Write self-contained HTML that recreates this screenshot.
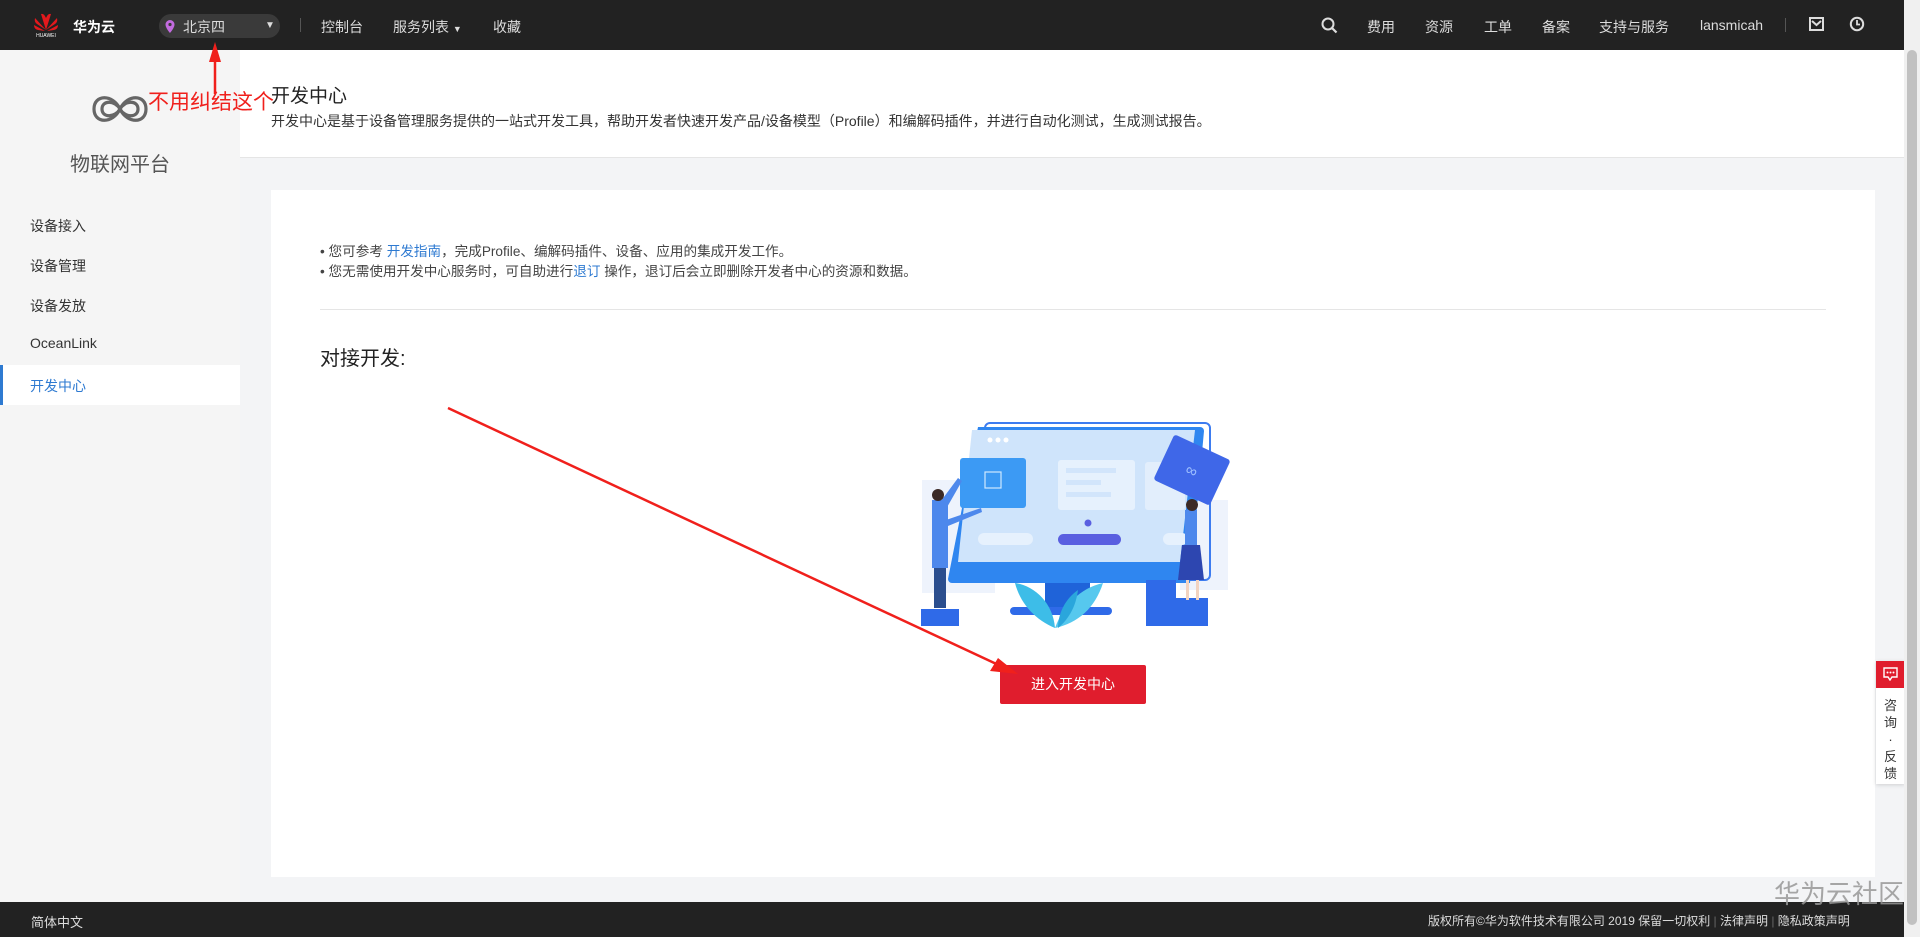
<!DOCTYPE html>
<html><head><meta charset="utf-8"><style>
*{margin:0;padding:0;box-sizing:border-box}
body{width:1920px;height:937px;overflow:hidden;background:#f3f4f6;font-family:"Liberation Sans","Noto Sans CJK SC",sans-serif;position:relative;color:#252b3a}
.abs{position:absolute;white-space:nowrap}
.top{position:absolute;left:0;top:0;width:1904px;height:50px;background:#222;color:#ddd;font-size:14px}
.top .abs{top:17px}
.side{position:absolute;left:0;top:50px;width:240px;height:852px;background:#f5f5f5}
.side .it{position:absolute;left:30px;font-size:14px;color:#333}
.hdr{position:absolute;left:240px;top:50px;width:1664px;height:108px;background:#fff;border-bottom:1px solid #e5e5e5}
.card{position:absolute;left:271px;top:190px;width:1604px;height:687px;background:#fff}
.foot{position:absolute;left:0;top:902px;width:1904px;height:35px;background:#222;color:#ddd;font-size:13px}
.sb{position:absolute;left:1904px;top:0;width:16px;height:937px;background:#f0f0f0}
.sb i{position:absolute;left:3px;top:50px;width:10px;height:875px;background:#c1c1c1;border-radius:5px}
a{color:#2e7ad1;text-decoration:none}
</style></head><body>
<div class="top">
 <svg class="abs" style="left:32px;top:10px" width="28" height="28" viewBox="0 0 28 28"><g fill="#e3191d"><path d="M14 20 L9 4 Q12 3 14 8Z"/><path d="M14 20 L19 4 Q16 3 14 8Z"/><path d="M14 20 L3 8 Q2 12 5 14Z"/><path d="M14 20 L25 8 Q26 12 23 14Z"/><path d="M13 21 L2 15 Q2 19 6 20Z"/><path d="M15 21 L26 15 Q26 19 22 20Z"/></g><text x="14" y="27" font-size="5" fill="#fff" text-anchor="middle" font-family="Liberation Sans">HUAWEI</text></svg>
 <div class="abs" style="left:73px;color:#fff;font-weight:bold">华为云</div>
 <div class="abs" style="left:159px;top:14px;width:121px;height:24px;background:#3a3a3a;border-radius:12px"></div>
 <svg class="abs" style="left:165px;top:20px" width="10" height="13" viewBox="0 0 10 13"><path d="M5 0a4.5 4.5 0 0 0-4.5 4.5C.5 8 5 13 5 13s4.5-5 4.5-8.5A4.5 4.5 0 0 0 5 0z" fill="#c36be0"/><circle cx="5" cy="4.5" r="1.6" fill="#3a3a3a"/></svg>
 <div class="abs" style="left:183px">北京四</div>
 <div class="abs" style="left:265px;font-size:10px;top:20px">▼</div>
 <div class="abs" style="left:300px;top:18px;width:1px;height:14px;background:#555"></div>
 <div class="abs" style="left:321px">控制台</div>
 <div class="abs" style="left:393px">服务列表 <span style="font-size:9px">▼</span></div>
 <div class="abs" style="left:493px">收藏</div>
 <svg class="abs" style="left:1321px;top:17px" width="17" height="17" viewBox="0 0 17 17"><circle cx="7" cy="7" r="5.5" fill="none" stroke="#ddd" stroke-width="2"/><path d="M11 11l4.5 4.5" stroke="#ddd" stroke-width="2.2"/></svg>
 <div class="abs" style="left:1367px">费用</div>
 <div class="abs" style="left:1425px">资源</div>
 <div class="abs" style="left:1484px">工单</div>
 <div class="abs" style="left:1542px">备案</div>
 <div class="abs" style="left:1599px">支持与服务</div>
 <div class="abs" style="left:1700px">lansmicah</div>
 <div class="abs" style="left:1785px;top:18px;width:1px;height:14px;background:#555"></div>
 <svg class="abs" style="left:1809px;top:17px" width="15" height="14" viewBox="0 0 15 14"><rect x="1" y="1" width="13" height="12" fill="none" stroke="#ddd" stroke-width="2"/><path d="M3 4l4.5 4 4.5-4" fill="none" stroke="#ddd" stroke-width="2"/></svg>
 <svg class="abs" style="left:1849px;top:16px" width="16" height="16" viewBox="0 0 16 16"><circle cx="8" cy="8" r="6.2" fill="none" stroke="#ddd" stroke-width="2"/><path d="M8 4v4.5h3" fill="none" stroke="#ddd" stroke-width="1.8"/></svg>
</div>
<div class="side">
 <svg class="abs" style="left:91px;top:40px" width="58" height="38" viewBox="0 0 58 38"><g fill="none" stroke="#666" stroke-width="3.2"><path d="M29 19C22 4 3 4 3 19s19 15 26 0 26-15 26 0-19 15-26 0"/><path d="M29 19C24 10 11 10 11 19s13 9 18 0 18-9 18 0-13 9-18 0"/></g></svg>
 <div class="abs" style="left:0;width:240px;text-align:center;top:98px;font-size:20px;color:#555">物联网平台</div>
 <div class="it" style="top:166px">设备接入</div>
 <div class="it" style="top:206px">设备管理</div>
 <div class="it" style="top:246px">设备发放</div>
 <div class="it" style="top:285px">OceanLink</div>
 <div style="position:absolute;left:0;top:315px;width:240px;height:40px;background:#fff;border-left:3px solid #2e7ad1"></div>
 <div class="it" style="top:326px;color:#2e7ad1">开发中心</div>
</div>
<div class="hdr">
 <div class="abs" style="left:31px;top:31px;font-size:19px;color:#222">开发中心</div>
 <div class="abs" style="left:31px;top:61px;font-size:14px;color:#333">开发中心是基于设备管理服务提供的一站式开发工具，帮助开发者快速开发产品/设备模型（Profile）和编解码插件，并进行自动化测试，生成测试报告。</div>
</div>
<div class="card">
 <div class="abs" style="left:49px;top:50px;font-size:13.6px;color:#444">• 您可参考 <a>开发指南</a>，完成Profile、编解码插件、设备、应用的集成开发工作。</div>
 <div class="abs" style="left:49px;top:70px;font-size:13.6px;color:#444">• 您无需使用开发中心服务时，可自助进行<a>退订</a> 操作，退订后会立即删除开发者中心的资源和数据。</div>
 <div class="abs" style="left:49px;top:119px;width:1506px;height:1px;background:#e5e5e5"></div>
 <div class="abs" style="left:49px;top:152px;font-size:20px;color:#222">对接开发:</div>
 <div class="abs" style="left:729px;top:475px;width:146px;height:39px;background:#e01d2d;color:#fff;font-size:14px;text-align:center;line-height:39px;border-radius:2px">进入开发中心</div>
</div>
<svg class="abs" style="left:900px;top:410px" width="340" height="230" viewBox="900 410 340 230">
 <rect x="922" y="480" width="73" height="113" fill="#eef3fc"/>
 <rect x="1180" y="500" width="48" height="90" fill="#eef3fc"/>
 <rect x="985" y="423" width="225" height="157" rx="5" fill="none" stroke="#3d7cf0" stroke-width="2"/>
 <path d="M978 427H1200a4 4 0 0 1 4 4L1190 583H952a4 4 0 0 1-4-4Z" fill="#2f86f0"/>
 <path d="M972 430H1195L1180 562H958Z" fill="#cfe4fb"/>
 <circle cx="990" cy="440" r="2.5" fill="#fff"/><circle cx="998" cy="440" r="2.5" fill="#fff"/><circle cx="1006" cy="440" r="2.5" fill="#fff"/>
 <rect x="1058" y="460" width="77" height="50" rx="3" fill="#e6f1fd"/>
 <rect x="1066" y="468" width="50" height="5" fill="#d2e5fb"/><rect x="1066" y="480" width="35" height="5" fill="#d2e5fb"/><rect x="1066" y="492" width="45" height="5" fill="#d2e5fb"/>
 <rect x="1145" y="462" width="40" height="48" rx="3" fill="#e2eefc"/>
 <rect x="978" y="533" width="55" height="12" rx="6" fill="#e6f1fd"/>
 <rect x="1163" y="533" width="25" height="12" rx="6" fill="#e6f1fd"/>
 <rect x="960" y="458" width="66" height="50" rx="3" fill="#3c9af4"/>
 <rect x="985" y="472" width="16" height="16" fill="none" stroke="#cfe8ff" stroke-width="1.2"/>
 <rect x="1058" y="534" width="63" height="11" rx="5.5" fill="#5a5fe0"/><circle cx="1088" cy="523" r="3.5" fill="#5a5fe0"/>
 <rect x="1045" y="583" width="45" height="25" fill="#1f63d9"/>
 <rect x="1010" y="607" width="102" height="8" rx="4" fill="#2f6ae8"/>
 <path d="M1055 628c-20-8-35-25-40-45 20 3 38 20 40 45z" fill="#3dbde8"/>
 <path d="M1055 628c8-22 25-40 48-45-8 25-25 40-48 45z" fill="#56c8ee"/>
 <path d="M1058 628c0-15 8-30 20-38 -2 15 -8 28 -20 38z" fill="#2aa6dc"/>
 <g transform="rotate(25 1192 470)"><rect x="1161" y="445" width="62" height="50" rx="3" fill="#3f67e8"/><text x="1192" y="476" font-size="16" fill="#9fc0ff" text-anchor="middle">∞</text></g>
 <rect x="1146" y="580" width="30" height="46" fill="#2f6ae8"/><rect x="1176" y="598" width="32" height="28" fill="#2f6ae8"/>
 <path d="M938 505l20-27 4 3-16 28z" fill="#4d88ec"/>
 <rect x="932" y="500" width="16" height="68" fill="#4d88ec"/><rect x="934" y="568" width="12" height="40" fill="#2b4e8e"/><circle cx="938" cy="495" r="6" fill="#3b2a26"/>
 <path d="M946 520l35-12 1 4-34 14z" fill="#4d88ec"/>
 <rect x="921" y="609" width="38" height="17" fill="#2f6ae8"/>
 <rect x="1185" y="510" width="12" height="40" fill="#4d88ec"/><path d="M1182 545h18l4 35h-26z" fill="#2d46b0"/><circle cx="1192" cy="505" r="6" fill="#3b2a26"/>
 <rect x="1186" y="580" width="3" height="20" fill="#f2d3c0"/><rect x="1196" y="580" width="3" height="20" fill="#f2d3c0"/>
</svg>
<div class="abs" style="left:1876px;top:661px;width:29px;height:123px;background:#fff;box-shadow:0 1px 4px rgba(0,0,0,.15)"></div>
<div class="abs" style="left:1876px;top:661px;width:29px;height:27px;background:#e01d2d"></div>
<svg class="abs" style="left:1883px;top:667px" width="15" height="14" viewBox="0 0 15 14"><path d="M1 1h13v9H9l-2 3-2-3H1z" fill="none" stroke="#fff" stroke-width="1.4"/><circle cx="4.5" cy="5.5" r="1" fill="#fff"/><circle cx="7.5" cy="5.5" r="1" fill="#fff"/><circle cx="10.5" cy="5.5" r="1" fill="#fff"/></svg>
<div class="abs" style="left:1876px;top:697px;width:29px;font-size:13px;line-height:17px;text-align:center;white-space:normal;color:#333">咨<br>询<br>·<br>反<br>馈</div>
<div class="foot">
 <div class="abs" style="left:31px;top:10px">简体中文</div>
 <div class="abs" style="left:1428px;top:10px;font-size:12px">版权所有©华为软件技术有限公司 2019 保留一切权利 <span style="color:#666">|</span> 法律声明 <span style="color:#666">|</span> 隐私政策声明</div>
</div>
<div class="abs" style="left:1774px;top:874px;font-size:26px;color:rgba(150,150,150,.85)">华为云社区</div>
<div class="sb"><i></i></div>
<svg class="abs" style="left:0;top:0" width="1920" height="937">
 <g stroke="#f0201c" fill="#f0201c">
  <line x1="448" y1="408" x2="1005" y2="668" stroke-width="2.5"/>
  <path d="M1018 674l-28-3 8-13z" stroke="none"/>
  <line x1="215" y1="94" x2="215" y2="56" stroke-width="2.5"/>
  <path d="M215 42l-6 20h12z" stroke="none"/>
 </g>
</svg>
<div class="abs" style="left:148px;top:86px;font-size:21px;color:#f0201c">不用纠结这个</div>
</body></html>
